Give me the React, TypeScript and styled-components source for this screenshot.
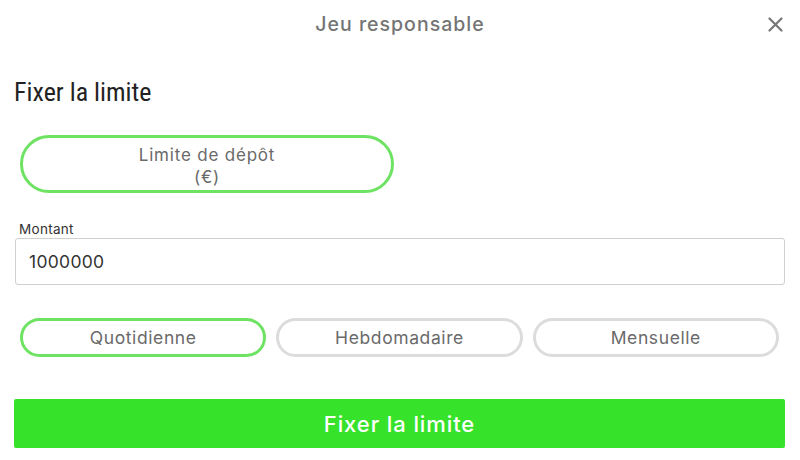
import styled, { createGlobalStyle } from 'styled-components';
import { useState } from 'react';

const GlobalStyle = createGlobalStyle`
    html, body {
        margin: 0;
        padding: 0;
        background: #ffffff;
    }
    body {
        font-family: Inter, "Open Sans", "Liberation Sans", sans-serif;
    }
`;

const Modal = styled.div`
    width: 800px;
    height: 460px;
    box-sizing: border-box;
    padding: 0 15px;
    display: flex;
    flex-direction: column;
`;

const Header = styled.header`
    position: relative;
    height: 48px;
    display: flex;
    align-items: center;
    justify-content: center;
`;

const Title = styled.h2`
    margin: 0;
    font-size: 19.5px;
    font-weight: 500;
    color: #747474;
    letter-spacing: 1px;
`;

const CloseButton = styled.button`
    position: absolute;
    right: 1px;
    top: 15px;
    width: 18px;
    height: 18px;
    padding: 0;
    border: none;
    background: none;
    cursor: pointer;
    display: flex;
    align-items: center;
    justify-content: center;
`;

const SectionTitle = styled.h3`
    margin: 29px 0 0 -1px;
    font-family: "Roboto Condensed", Roboto, "Open Sans", sans-serif;
    font-stretch: condensed;
    font-size: 26px;
    font-weight: 400;
    color: #222;
    line-height: 30px;
`;

const LimitType = styled.div`
    margin: 28px 0 0 5px;
    width: 374px;
    height: 58px;
    box-sizing: border-box;
    padding-top: 3px;
    border: 3px solid #6ee363;
    border-radius: 29px;
    display: flex;
    flex-direction: column;
    align-items: center;
    justify-content: center;
    font-size: 17px;
    letter-spacing: 0.8px;
    line-height: 22px;
    color: #6a6a6a;
`;

const Field = styled.div`
    margin-top: 28px;
    display: flex;
    flex-direction: column;
`;

const Label = styled.label`
    font-size: 13.5px;
    letter-spacing: 0.3px;
    color: #333;
    margin-left: 4px;
    line-height: 16px;
`;

const Input = styled.input`
    margin-top: 1px;
    height: 47px;
    box-sizing: border-box;
    border: 1px solid #d0d0d0;
    border-radius: 3px;
    padding: 0 13px;
    font-family: Inter, "Open Sans", sans-serif;
    font-size: 17.5px;
    letter-spacing: 0.3px;
    color: #333;
    outline: none;
`;

const Periods = styled.div`
    margin: 33px 6px 0 5px;
    display: grid;
    grid-template-columns: repeat(3, 1fr);
    gap: 10px;
`;

const PeriodButton = styled.button<{ $active: boolean }>`
    height: 39px;
    box-sizing: border-box;
    border: 3px solid ${p => (p.$active ? '#6ee363' : '#dcdcdc')};
    border-radius: 20px;
    background: #fff;
    font-family: Inter, "Open Sans", sans-serif;
    font-size: 17.5px;
    letter-spacing: 0.6px;
    color: #6a6a6a;
    cursor: pointer;
`;

const Submit = styled.button`
    margin: 42px 0 0 -1px;
    height: 49px;
    border: none;
    border-radius: 2px;
    background: #37e22a;
    color: #fff;
    font-family: Inter, "Open Sans", sans-serif;
    font-size: 22px;
    font-weight: 500;
    letter-spacing: 0.9px;
    cursor: pointer;
`;

const periods = ['Quotidienne', 'Hebdomadaire', 'Mensuelle'];

export default function App() {
    const [period, setPeriod] = useState('Quotidienne');
    const [amount, setAmount] = useState('1000000');

    return (
        <>
            <GlobalStyle />
            <Modal>
                <Header>
                    <Title>Jeu responsable</Title>
                    <CloseButton aria-label="Fermer">
                        <svg width="15" height="15" viewBox="0 0 15 15">
                            <path d="M1.5 1.5 L13.5 13.5 M13.5 1.5 L1.5 13.5" stroke="#777" strokeWidth="2.2" strokeLinecap="round" />
                        </svg>
                    </CloseButton>
                </Header>
                <SectionTitle>Fixer la limite</SectionTitle>
                <LimitType>
                    <span>Limite de dépôt</span>
                    <span>(€)</span>
                </LimitType>
                <Field>
                    <Label htmlFor="montant">Montant</Label>
                    <Input id="montant" value={amount} onChange={e => setAmount(e.target.value)} />
                </Field>
                <Periods>
                    {periods.map(p => (
                        <PeriodButton key={p} $active={p === period} onClick={() => setPeriod(p)}>
                            {p}
                        </PeriodButton>
                    ))}
                </Periods>
                <Submit>Fixer la limite</Submit>
            </Modal>
        </>
    );
}
